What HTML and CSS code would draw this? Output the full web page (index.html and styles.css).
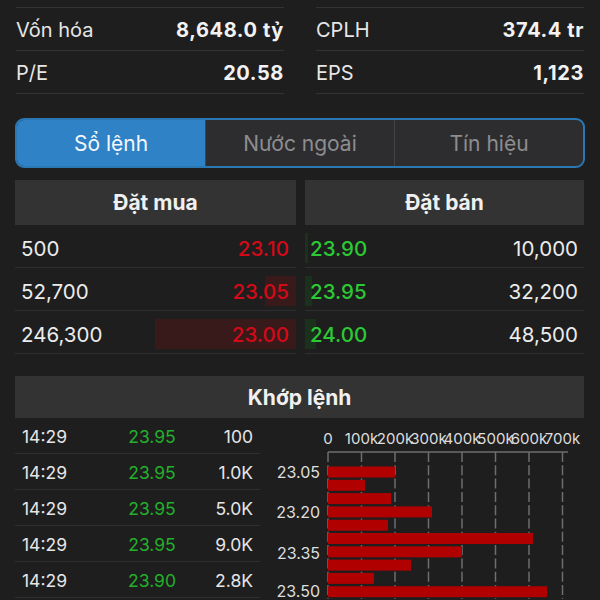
FILE: index.html
```html
<!DOCTYPE html>
<html lang="vi">
<head>
<meta charset="utf-8">
<link rel="stylesheet" href="styles.css">
</head>
<body>
<div class="stats">
  <div class="stat-col">
    <div class="stat-row"><span class="label">Vốn hóa</span><span class="value">8,648.0 tỷ</span></div>
    <div class="stat-row"><span class="label">P/E</span><span class="value">20.58</span></div>
  </div>
  <div class="stat-col">
    <div class="stat-row"><span class="label">CPLH</span><span class="value">374.4 tr</span></div>
    <div class="stat-row"><span class="label">EPS</span><span class="value">1,123</span></div>
  </div>
</div>

<div class="segment">
  <div class="seg active">Sổ lệnh</div>
  <div class="seg">Nước ngoài</div>
  <div class="seg">Tín hiệu</div>
</div>

<div class="book">
  <div class="book-col">
    <div class="head">Đặt mua</div>
    <div class="brow buy"><div class="bar"></div><span class="vol">500</span><span class="price red">23.10</span></div>
    <div class="brow buy"><div class="bar" style="width:31px"></div><span class="vol">52,700</span><span class="price red">23.05</span></div>
    <div class="brow buy"><div class="bar" style="width:141px"></div><span class="vol">246,300</span><span class="price red">23.00</span></div>
  </div>
  <div class="book-col">
    <div class="head">Đặt bán</div>
    <div class="brow sell"><div class="bar" style="width:3px"></div><span class="price green">23.90</span><span class="vol">10,000</span></div>
    <div class="brow sell"><div class="bar" style="width:7px"></div><span class="price green">23.95</span><span class="vol">32,200</span></div>
    <div class="brow sell"><div class="bar" style="width:11px"></div><span class="price green">24.00</span><span class="vol">48,500</span></div>
  </div>
</div>

<div class="match-head">Khớp lệnh</div>
<div class="match">
  <div class="trades">
    <div class="trow"><span>14:29</span><span class="tp">23.95</span><span class="tv">100</span></div>
    <div class="trow"><span>14:29</span><span class="tp">23.95</span><span class="tv">1.0K</span></div>
    <div class="trow"><span>14:29</span><span class="tp">23.95</span><span class="tv">5.0K</span></div>
    <div class="trow"><span>14:29</span><span class="tp">23.95</span><span class="tv">9.0K</span></div>
    <div class="trow"><span>14:29</span><span class="tp">23.90</span><span class="tv">2.8K</span></div>
  </div>
  <svg class="chart" width="330" height="181" viewBox="0 0 330 181">
    <g class="ticks" text-anchor="middle">
      <text x="58" y="26">0</text>
      <text x="91.5" y="26">100k</text>
      <text x="125" y="26">200k</text>
      <text x="158.5" y="26">300k</text>
      <text x="192" y="26">400k</text>
      <text x="225.5" y="26">500k</text>
      <text x="259" y="26">600k</text>
      <text x="292.5" y="26">700k</text>
    </g>
    <g class="grid">
      <line x1="58" y1="34" x2="58" y2="181"/>
      <line x1="91.5" y1="34" x2="91.5" y2="181"/>
      <line x1="125" y1="34" x2="125" y2="181"/>
      <line x1="158.5" y1="34" x2="158.5" y2="181"/>
      <line x1="192" y1="34" x2="192" y2="181"/>
      <line x1="225.5" y1="34" x2="225.5" y2="181"/>
      <line x1="259" y1="34" x2="259" y2="181"/>
      <line x1="292.5" y1="34" x2="292.5" y2="181"/>
    </g>
    <line class="axis" x1="58" y1="34" x2="298" y2="34"/>
    <g class="bars">
      <rect x="58" y="48.5" width="67" height="11"/>
      <rect x="58" y="61.8" width="37" height="11"/>
      <rect x="58" y="75.1" width="63" height="11"/>
      <rect x="58" y="88.4" width="104" height="11"/>
      <rect x="58" y="101.7" width="60" height="11"/>
      <rect x="58" y="115" width="205" height="11"/>
      <rect x="58" y="128.3" width="134" height="11"/>
      <rect x="58" y="141.6" width="83" height="11"/>
      <rect x="58" y="154.9" width="46" height="11"/>
      <rect x="58" y="168.2" width="219" height="11"/>
    </g>
    <g class="ylabels" text-anchor="end">
      <text x="50" y="60">23.05</text>
      <text x="50" y="100">23.20</text>
      <text x="50" y="140.5">23.35</text>
      <text x="50" y="178.5">23.50</text>
    </g>
  </svg>
</div>
</body>
</html>
```
FILE: styles.css
```css
* { box-sizing: border-box; }
html, body { margin: 0; padding: 0; }
body {
  background: #1e1e1f;
  color: #ececec;
  font-family: Inter, "Noto Sans", sans-serif;
  width: 600px;
  height: 600px;
  overflow: hidden;
}

.stats {
  display: grid;
  grid-template-columns: 1fr 1fr;
  gap: 32px;
  padding: 7px 16px 0 16px;
}
.stat-col { border-top: 1px solid #333335; }
.stat-row {
  height: 43px;
  display: flex;
  align-items: center;
  justify-content: space-between;
  border-bottom: 1px solid #333335;
  font-size: 20px;
  padding-top: 2px;
}
.stat-row .label { color: #e6e6e6; }
.stat-row .value { font-weight: 700; color: #f2f2f2; letter-spacing: 0.6px; }

.segment {
  margin: 24px 15px 0 15px;
  height: 50px;
  display: flex;
  border: 2px solid #2a77b3;
  border-radius: 9px;
  overflow: hidden;
  background: #2d2d2f;
}
.seg {
  flex: 1;
  display: flex;
  align-items: center;
  justify-content: center;
  font-size: 21px;
  color: #8d8d8f;
  border-left: 1px solid #444446;
}
.seg:first-child { border-left: none; }
.seg.active { background: #2e82c5; color: #f4f8fc; }

.book {
  display: grid;
  grid-template-columns: 281px 279px;
  gap: 9px;
  margin: 12px 16px 0 15px;
}
.head {
  height: 45px;
  background: #333334;
  display: flex;
  align-items: center;
  justify-content: center;
  font-size: 21px;
  font-weight: 700;
  color: #f0f0f0;
}
.brow {
  position: relative;
  height: 43px;
  display: flex;
  align-items: center;
  justify-content: space-between;
  border-bottom: 1px solid #2f2f31;
  font-size: 20.5px;
  padding-top: 5px;
}
.brow.buy { padding-left: 6px; padding-right: 7px; }
.brow.sell { padding-left: 5px; padding-right: 6px; }
.brow span { position: relative; }
.brow .bar {
  position: absolute;
  top: 8px;
  bottom: 4px;
  width: 0;
}
.brow.buy .bar { right: 0; background: #391a1b; }
.brow.sell .bar { left: 0; background: #1a311c; }
.red { color: #d20a18; }
.green { color: #2bc934; }
.brow .price { font-weight: 500; }

.match-head {
  margin: 22px 16px 0 15px;
  height: 42px;
  background: #333334;
  display: flex;
  align-items: center;
  justify-content: center;
  font-size: 21px;
  font-weight: 700;
  color: #f0f0f0;
}
.match {
  display: flex;
  align-items: flex-start;
}
.trades {
  width: 245px;
  margin-left: 15px;
}
.trow {
  height: 36px;
  display: grid;
  grid-template-columns: 95px 70px 1fr;
  align-items: center;
  padding: 1px 7px 0 7px;
  border-bottom: 1px solid #2f2f31;
  font-size: 17.5px;
  color: #e6e6e6;
}
.trow .tp { text-align: center; color: #23b02b; }
.trow .tv { text-align: right; }

.chart {
  display: block;
  margin-left: 10px;
  flex: none;
}
.chart text {
  font-family: Inter, "Noto Sans", sans-serif;
  font-size: 15px;
  fill: #dedede;
}
.chart .ylabels text { font-size: 16px; }
.chart .grid line {
  stroke: #6e6e70;
  stroke-width: 1.5;
  stroke-dasharray: 10 3.3;
}
.chart .axis { stroke: #6e6e70; stroke-width: 1.5; }
.chart .bars rect { fill: #b00000; }
```
